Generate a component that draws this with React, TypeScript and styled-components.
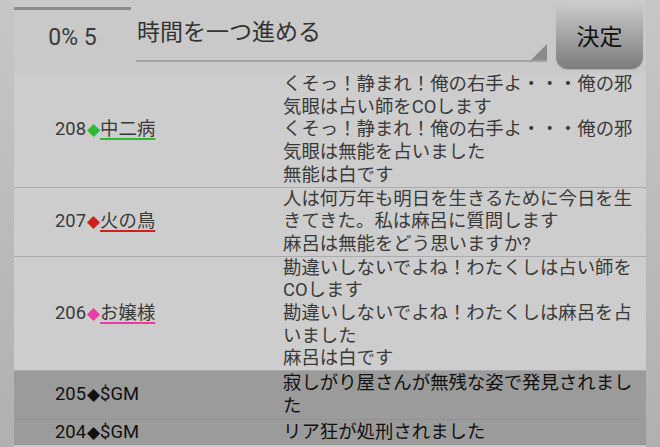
import React from "react";
import styled, { createGlobalStyle } from "styled-components";

const Global = createGlobalStyle`
  html, body { margin: 0; padding: 0; }
  body {
    width: 660px;
    height: 447px;
    overflow: hidden;
    background: linear-gradient(#c6c6c6, #b0b0b0);
    font-family: Roboto, "Noto Sans CJK JP", sans-serif;
  }
`;

const Page = styled.div`
  margin: 0 14px;
  background: #c9c9c9;
  height: 447px;
  display: flex;
  flex-direction: column;
`;

const Header = styled.div`
  height: 73px;
  display: flex;
  align-items: stretch;
  padding-right: 3px;
`;

const ProgressCell = styled.div`
  width: 117px;
  display: flex;
  flex-direction: column;
  align-items: stretch;
  margin-right: 5px;
`;

const ProgressBar = styled.div`
  margin-top: 7px;
  height: 3px;
  background: #8d8d8d;
`;

const ProgressText = styled.div`
  margin-top: 14px;
  text-align: center;
  font-size: 23px;
  color: #3a3a3a;
  line-height: 28px;
`;

const InputBox = styled.div`
  position: relative;
  width: 411px;
  height: 62px;
  border-bottom: 2px solid #a2a2a2;
  box-sizing: border-box;
  margin-right: 9px;
`;

const InputText = styled.div`
  padding: 18px 0 0 1px;
  font-size: 23px;
  line-height: 30px;
  color: #333;
`;

const Corner = styled.div`
  position: absolute;
  right: 0;
  bottom: 0;
  width: 0;
  height: 0;
  border-left: 16px solid transparent;
  border-bottom: 16px solid #8a8a8a;
`;

const Button = styled.div`
  margin-top: 1px;
  width: 87px;
  height: 68px;
  border-radius: 12px;
  background: linear-gradient(#cdcdcd, #7c7c7c);
  display: flex;
  align-items: center;
  justify-content: center;
  font-size: 23px;
  color: #111;
  box-shadow: 0 1px 1px rgba(0, 0, 0, 0.15);
`;

const List = styled.div`
  display: flex;
  flex-direction: column;
`;

const Row = styled.div<{ $gm?: boolean }>`
  display: grid;
  grid-template-columns: 269px 1fr;
  padding: ${(p) => (p.$gm ? "1px 0" : "0")};
  background: ${(p) => (p.$gm ? "#9b9b9b" : "#cdcdcd")};
  border-bottom: 1px solid ${(p) => (p.$gm ? "#929292" : "#ababab")};
  color: ${(p) => (p.$gm ? "#111" : "#3a3a3a")};
  font-size: 18.4px;
  line-height: 22.7px;
`;

const Who = styled.div`
  display: flex;
  align-items: center;
  padding-left: 41px;
`;

const Diamond = styled.span<{ $c: string }>`
  font-family: "DejaVu Sans", sans-serif;
  font-size: 17px;
  color: ${(p) => p.$c};
  margin: 0 0 0 1px;
`;

const Name = styled.span<{ $c?: string }>`
  text-decoration: ${(p) => (p.$c ? "underline" : "none")};
  text-decoration-color: ${(p) => p.$c || "transparent"};
  text-decoration-thickness: 2px;
  text-underline-offset: 3px;
`;

const Msgs = styled.div`
  padding-right: 4px;
`;

const Line = styled.div``;

type Item = { no: number; name: string; color?: string; gm?: boolean; lines: string[] };

const items: Item[] = [
  {
    no: 208,
    name: "中二病",
    color: "#2dbb2d",
    lines: [
      "くそっ！静まれ！俺の右手よ・・・俺の邪気眼は占い師をCOします",
      "くそっ！静まれ！俺の右手よ・・・俺の邪気眼は無能を占いました",
      "無能は白です",
    ],
  },
  {
    no: 207,
    name: "火の鳥",
    color: "#d01f1f",
    lines: [
      "人は何万年も明日を生きるために今日を生きてきた。私は麻呂に質問します",
      "麻呂は無能をどう思いますか?",
    ],
  },
  {
    no: 206,
    name: "お嬢様",
    color: "#ee3aa6",
    lines: [
      "勘違いしないでよね！わたくしは占い師をCOします",
      "勘違いしないでよね！わたくしは麻呂を占いました",
      "麻呂は白です",
    ],
  },
  { no: 205, name: "$GM", gm: true, lines: ["寂しがり屋さんが無残な姿で発見されました"] },
  { no: 204, name: "$GM", gm: true, lines: ["リア狂が処刑されました"] },
];

export default function App() {
  return (
    <>
      <Global />
      <Page>
        <Header>
          <ProgressCell>
            <ProgressBar />
            <ProgressText>0% 5</ProgressText>
          </ProgressCell>
          <InputBox>
            <InputText>時間を一つ進める</InputText>
            <Corner />
          </InputBox>
          <Button>決定</Button>
        </Header>
        <List>
          {items.map((it) => (
            <Row key={it.no} $gm={it.gm}>
              <Who>
                {it.no}
                <Diamond $c={it.color || "#111"}>◆</Diamond>
                <Name $c={it.color}>{it.name}</Name>
              </Who>
              <Msgs>
                {it.lines.map((l, i) => (
                  <Line key={i}>{l}</Line>
                ))}
              </Msgs>
            </Row>
          ))}
        </List>
      </Page>
    </>
  );
}
